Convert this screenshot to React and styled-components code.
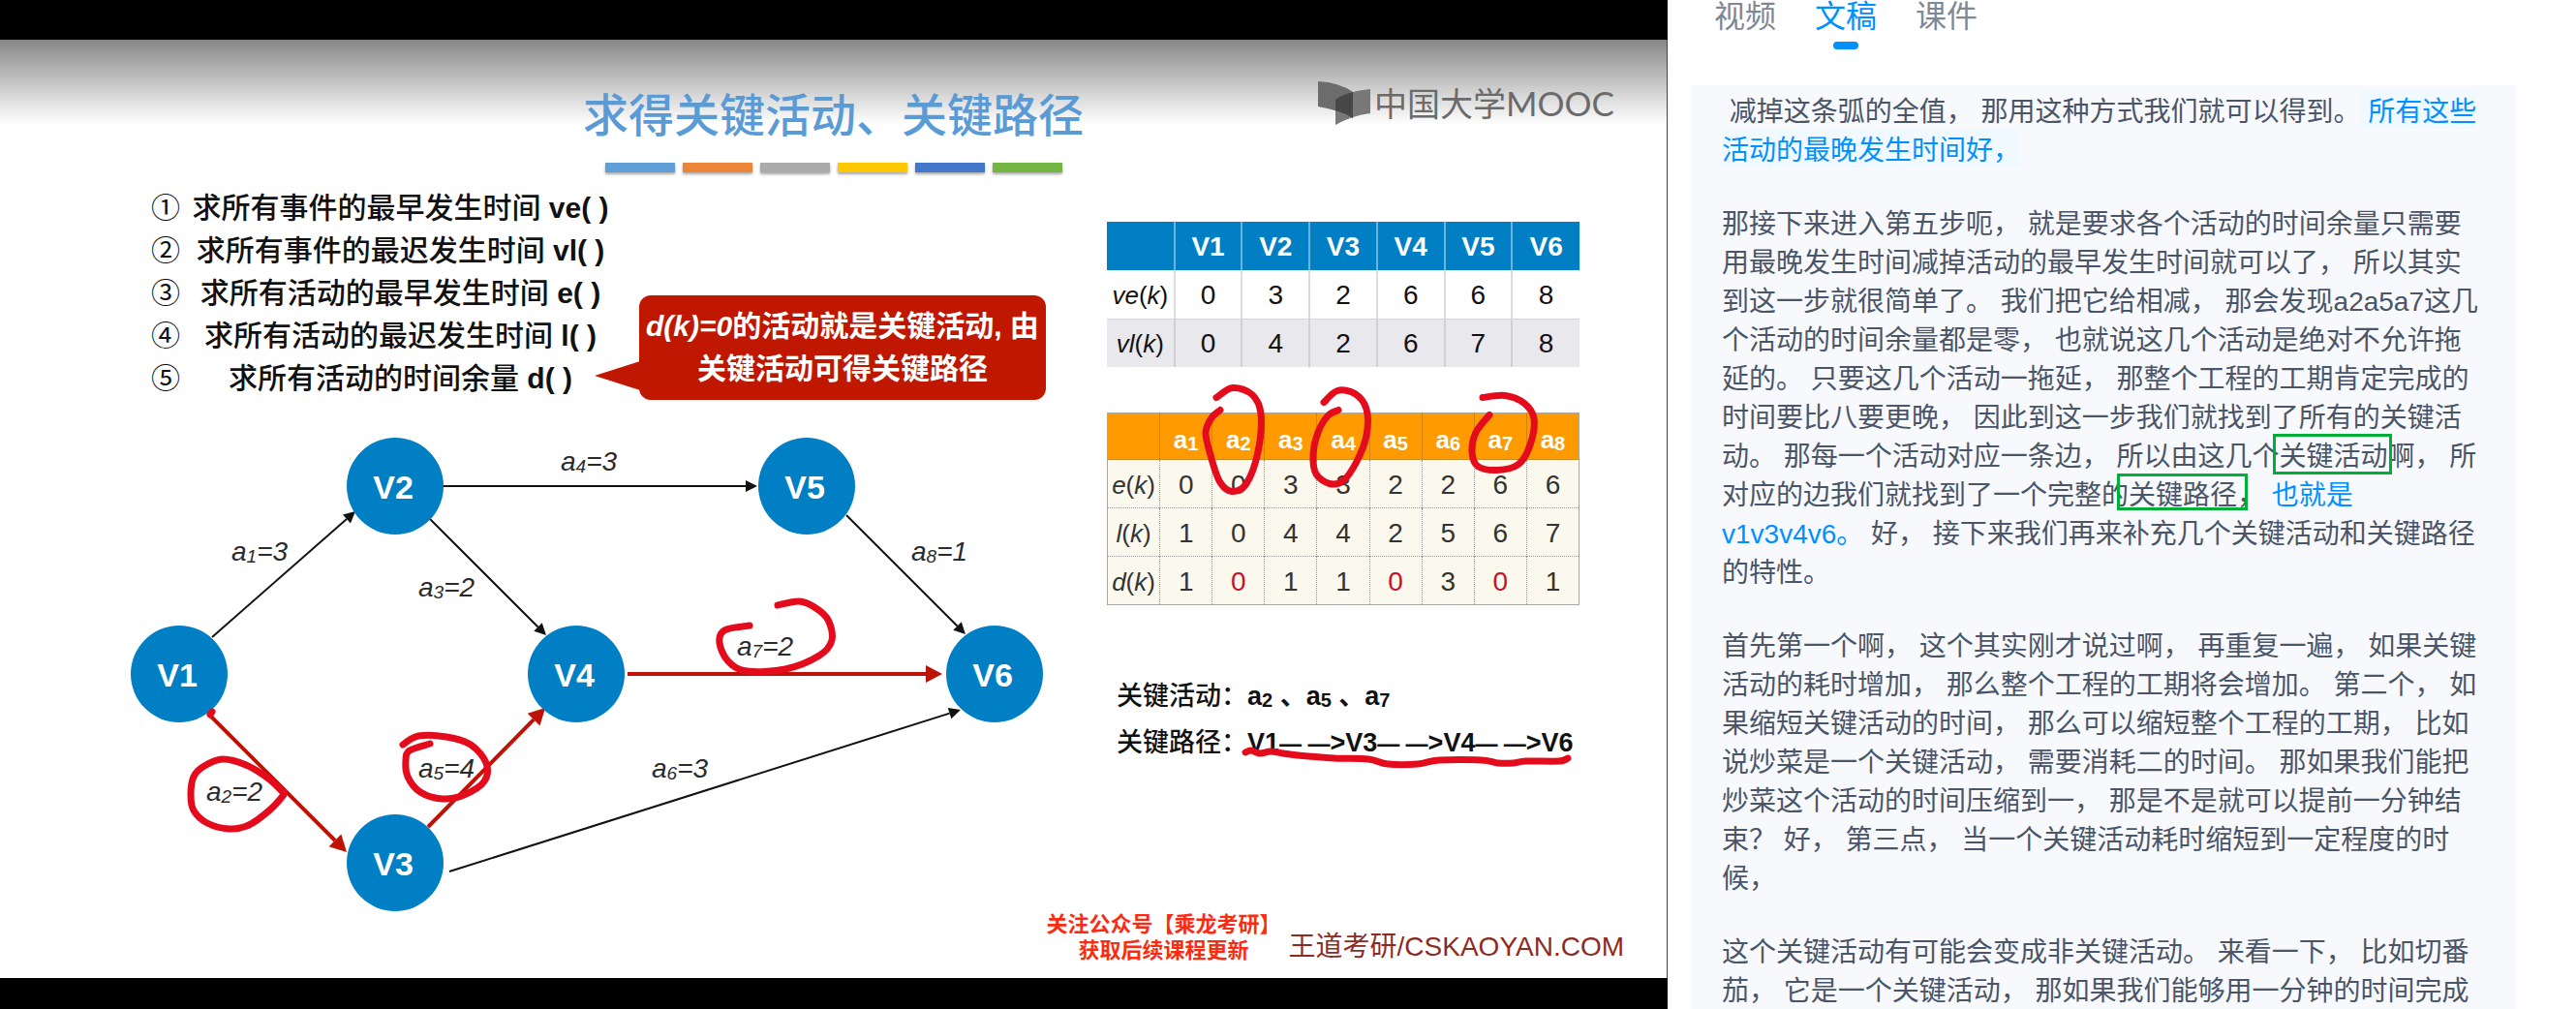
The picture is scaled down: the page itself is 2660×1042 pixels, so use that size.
import React from "react";
import styled, { createGlobalStyle, css } from "styled-components";

const SANS = '"Liberation Sans", "Noto Sans CJK SC", sans-serif';

const GlobalStyle = createGlobalStyle`
  *, *::before, *::after { box-sizing: border-box; }
  html, body { margin: 0; height: 100%; }
  body { background: #fff; font-family: ${SANS}; overflow: hidden; }
  #root { height: 100%; }
  h1, p, ol, ul { margin: 0; padding: 0; }
`;

const Page = styled.div`
  display: grid;
  grid-template-columns: 1722fr 938fr;
  min-height: 100%;
`;

/* ---------- video side ---------- */

const Player = styled.main`
  display: flex;
  flex-direction: column;
  padding: 41px 0 32px;
  background: #000;
`;

const Slide = styled.section`
  flex: 1;
  display: flex;
  flex-direction: column;
  border-right: 1px solid #444;
  background: linear-gradient(#868686 0, #b4b4b4 32px, #e0e0e0 64px, #fff 88px);
`;

const SlideHeader = styled.header`
  display: grid;
  grid-template-columns: 1fr auto 1fr;
  align-items: start;
  padding: 40px 54px 0;
`;

const Heading = styled.div`
  grid-column: 2;
  display: flex;
  flex-direction: column;
  align-items: center;
  gap: 15px;
  padding-top: 5px;
`;

const Title = styled.h1`
  color: #5b9bd5;
  font-size: 47px;
  font-weight: 500;
  line-height: 67px;
`;

const Bars = styled.div`
  display: flex;
  gap: 8px;
`;

const Bar = styled.span`
  width: 72px;
  height: 10px;
  background: ${(p) => p.$color};
  box-shadow: 0 2px 3px rgba(0, 0, 0, 0.35);
`;

const Brand = styled.div`
  justify-self: end;
  display: flex;
  align-items: center;
  gap: 4px;
  color: #6b6b6b;
  font-size: 34px;
  font-weight: 400;
  line-height: 50px;
`;

const BrandLatin = styled.span`
  font-family: Lato, ${SANS};
  font-size: 35px;
`;

const SlideBody = styled.div`
  display: grid;
  grid-template-columns: minmax(0, 1fr) 488px;
  padding: 15px 90px 0 100px;
`;

const StepsRow = styled.div`
  display: flex;
  align-items: flex-end;
  padding-left: 56px;
`;

const Steps = styled.ol`
  list-style: none;
  width: 475px;
`;

const Step = styled.li`
  display: grid;
  grid-template-columns: 30px 1fr;
  column-gap: 10px;
  color: #111;
  font-size: 30px;
  font-weight: 500;
  line-height: 44px;
  text-align: center;
`;

const StepMark = styled.span`
  font-weight: 400;
`;

const Code = styled.b`
  font-weight: 700;
`;

const Callout = styled.div`
  position: relative;
  margin-left: 29px;
  padding: 10px 7px;
  border-radius: 12px;
  background: #c01700;
  color: #fff;
  font-size: 30px;
  font-weight: 700;
  line-height: 44px;
  text-align: center;
  white-space: nowrap;

  &::before {
    content: "";
    position: absolute;
    left: -46px;
    top: 68px;
    border: solid transparent;
    border-width: 15px 47px 15px 0;
    border-right-color: #c01700;
  }
`;

const Diagram = styled.svg`
  display: block;
  width: 100%;
  margin-top: 19px;
  overflow: visible;
`;

const NodeText = styled.text`
  fill: #fff;
  font: 700 34px ${SANS};
  text-anchor: middle;
`;

const EdgeText = styled.text`
  fill: #2b2b2b;
  font: italic 28px ${SANS};
`;

const Results = styled.div`
  display: flex;
  flex-direction: column;
  padding-top: 36px;
`;

const TableWrap = styled.div`
  position: relative;
  margin-top: ${(p) => p.$gap || 0}px;
`;

const InkOverlay = styled.svg`
  position: absolute;
  inset: 0;
  width: 100%;
  height: 100%;
  overflow: visible;
  pointer-events: none;
`;

const Grid = styled.table`
  width: 100%;
  table-layout: fixed;
  border-collapse: collapse;
  text-align: center;
  font-size: 28px;
  line-height: 32px;

  th, td { padding: 2px 0 0; }
  tbody th {
    font-size: 26px;
    font-weight: 400;
    white-space: nowrap;
  }
`;

const EventTable = styled(Grid)`
  color: #111;
  th, td { height: 50px; }
  thead th {
    background: #007fc4;
    color: #fff;
    font-weight: 700;
  }
  th + th { border-left: 2px solid #6db4dd; }
  td { border-left: 2px solid #dcdce0; }
  tbody tr + tr {
    background: #e8e8ed;
    border-top: 1px solid #d4d4d8;
    td { border-left-color: #cfcfd4; }
  }
`;

const ActivityTable = styled(Grid)`
  border: 1px solid #a8a8a0;
  color: #333;
  th, td { height: 50px; }
  thead th {
    height: 48px;
    padding-top: 6px;
    background: #ff9b00;
    color: #fff;
    font-size: 26px;
    font-weight: 700;
    border-bottom: 1px solid #c98a2a;
  }
  thead th + th { border-left: 1px solid #cf8210; }
  tbody { background: #fbf9ee; }
  td { border-left: 1px dotted #999; }
  tbody tr + tr { border-top: 1px dotted #999; }
`;

const Cell = styled.td`
  ${(p) => p.$zero && css`color: #c4122c;`}
`;

const Sub = styled.span`
  font-size: 20px;
  line-height: 0;
  vertical-align: -2px;
`;

const Summary = styled.div`
  position: relative;
  margin: 70px 0 0 10px;
  color: #111;
  font-size: 27px;
  font-weight: 500;
  line-height: 48px;
  white-space: nowrap;
`;

const SummaryBold = styled.b`
  font-weight: 700;
`;

const Dashes = styled.span`
  font-size: 23px;
  line-height: 0;
`;

const SlideFooter = styled.footer`
  display: flex;
  justify-content: flex-end;
  align-items: flex-end;
  gap: 8px;
  margin-top: auto;
  padding: 0 44px 13px;
`;

const Promo = styled.p`
  padding-bottom: 2px;
  color: #fb2b12;
  font-size: 22px;
  font-weight: 700;
  line-height: 27px;
  text-align: center;
`;

const Credit = styled.p`
  color: #8e2a22;
  font-size: 28px;
  line-height: 38px;
`;

/* ---------- transcript side ---------- */

const Side = styled.aside`
  height: 100vh;
  overflow: hidden;
  padding: 0 62px 0 24px;
  background: #fff;
`;

const Tabs = styled.nav`
  display: flex;
  gap: 40px;
  height: 88px;
  padding: 1px 0 0 24px;
`;

const Tab = styled.button`
  display: flex;
  flex-direction: column;
  align-items: center;
  gap: 10px;
  height: 50px;
  padding: 0;
  border: 0;
  background: none;
  color: ${(p) => (p.$active ? "#0091ff" : "#7f8896")};
  font: 400 32px/32px ${SANS};

  &::after {
    content: "";
    width: 26px;
    height: 8px;
    border-radius: 4px;
    background: ${(p) => (p.$active ? "#0091ff" : "transparent")};
  }
`;

const Transcript = styled.article`
  display: flex;
  flex-direction: column;
  gap: 36px;
  padding: 8px 32px 36px;
  background: #f8f9fd;
  color: #4a5568;
  font-size: 28px;
  line-height: 40px;
`;

const Blue = styled.span`
  color: #0091ff;
  ${(p) => p.$lit && css`
    padding: 6px 0 2px;
    background: #f0f9ff;
  `}
`;

const Boxed = styled.mark`
  position: relative;
  background: none;
  color: inherit;

  &::after {
    content: "";
    position: absolute;
    inset: ${(p) => (p.$wide ? "-7px -11px 0 -12px" : "-8px -4px -3px -7px")};
    border: 3px solid #00b036;
  }
`;

/* ---------- data ---------- */

const BAR_COLORS = ["#5f9ed6", "#ed8538", "#ababab", "#fec700", "#4478cb", "#75b544"];

const STEPS = [
  ["①", "求所有事件的最早发生时间", "ve( )"],
  ["②", "求所有事件的最迟发生时间", "vl( )"],
  ["③", "求所有活动的最早发生时间", "e( )"],
  ["④", "求所有活动的最迟发生时间", "l( )"],
  ["⑤", "求所有活动的时间余量", "d( )"],
];

const NODES = [
  ["V1", 185, 696], ["V2", 408, 502], ["V3", 408, 891],
  ["V4", 595, 696], ["V5", 833, 502], ["V6", 1027, 696],
];

const EDGES = [
  [219, 658, 367, 528], [444, 536, 564, 656], [458, 502, 782, 502],
  [874, 532, 997, 655], [464, 900, 992, 733],
];

const CRITICAL_EDGES = [
  [648, 696, 973, 696], [216, 738, 358, 880], [442, 854, 563, 731],
];

const EDGE_LABELS = [
  [1, 3, 239, 579], [2, 2, 213, 827], [3, 2, 432, 616], [4, 3, 579, 486],
  [5, 4, 432, 803], [6, 3, 673, 803], [7, 2, 761, 677], [8, 1, 941, 579],
];

const GRAPH_INK = [
  [[293, 819], [277, 804], [254, 790], [230, 784], [211, 791], [200, 802], [197, 821], [200, 837], [214, 850], [237, 856], [257, 852], [278, 837], [292, 822], [293, 818]],
  [[416, 769], [432, 760], [461, 761], [486, 769], [502, 788], [500, 807], [479, 821], [457, 825], [434, 818], [421, 802], [419, 785], [423, 775], [444, 768]],
  [[774, 646], [748, 651], [743, 664], [752, 683], [771, 693], [811, 691], [846, 677], [859, 661], [855, 640], [841, 627], [825, 621], [803, 625]],
  [[219, 735], [217, 738]],
];

const TABLE_INK = [
  [[1256, 411], [1273, 401], [1293, 408], [1302, 428], [1299, 467], [1287, 500], [1272, 508], [1259, 497], [1249, 467], [1245, 447], [1251, 432], [1260, 424]],
  [[1367, 416], [1381, 404], [1399, 407], [1411, 423], [1411, 450], [1401, 477], [1387, 497], [1373, 500], [1359, 490], [1356, 470], [1361, 447], [1371, 430], [1382, 424]],
  [[1531, 411], [1554, 409], [1574, 417], [1584, 433], [1580, 460], [1568, 480], [1546, 486], [1526, 482], [1520, 467], [1524, 447], [1538, 429]],
];

const UNDERLINE_INK = [
  [1286, 778], [1292, 776], [1301, 779], [1312, 777], [1325, 779], [1340, 781], [1378, 784],
  [1413, 785], [1433, 790], [1464, 790], [1486, 786], [1530, 786], [1547, 789], [1563, 789],
  [1576, 787], [1610, 787], [1619, 784],
];

const EVENTS = [["ve", [0, 3, 2, 6, 6, 8]], ["vl", [0, 4, 2, 6, 7, 8]]];

const ACTIVITIES = [
  ["e", [0, 0, 3, 3, 2, 2, 6, 6]],
  ["l", [1, 0, 4, 4, 2, 5, 6, 7]],
  ["d", [1, 0, 1, 1, 0, 3, 0, 1]],
];

/* Smooth curve through hand-drawn points. */
function strokePath(points) {
  let d = `M${points[0]}`;
  for (let i = 0; i < points.length - 1; i++) {
    const a = points[i - 1] || points[i];
    const b = points[i];
    const c = points[i + 1];
    const e = points[i + 2] || c;
    d += ` C${b[0] + (c[0] - a[0]) / 6},${b[1] + (c[1] - a[1]) / 6} ${c[0] - (e[0] - b[0]) / 6},${c[1] - (e[1] - b[1]) / 6} ${c}`;
  }
  return d;
}

function Ink({ points }) {
  return <path d={strokePath(points)} fill="none" stroke="#e30b1c" strokeWidth="7" strokeLinecap="round" strokeLinejoin="round" />;
}

function Arrow({ ends, critical }) {
  const [x1, y1, x2, y2] = ends;
  const len = Math.hypot(x2 - x1, y2 - y1);
  const ux = (x2 - x1) / len;
  const uy = (y2 - y1) / len;
  const head = critical ? 17 : 12;
  const half = critical ? 9 : 6;
  const bx = x2 - ux * head;
  const by = y2 - uy * head;
  const color = critical ? "#bd1206" : "#111";
  return (
    <g fill={color} stroke={color}>
      <line x1={x1} y1={y1} x2={bx} y2={by} strokeWidth={critical ? 4 : 2} />
      <polygon stroke="none" points={`${x2},${y2} ${bx - uy * half},${by + ux * half} ${bx + uy * half},${by - ux * half}`} />
    </g>
  );
}

function Graph() {
  return (
    <Diagram viewBox="100 432 1043 506" role="img" aria-label="AOE">
      {EDGES.map((e) => <Arrow key={e.join()} ends={e} />)}
      {CRITICAL_EDGES.map((e) => <Arrow key={e.join()} ends={e} critical />)}
      {NODES.map(([name, x, y]) => (
        <g key={name}>
          <circle cx={x} cy={y} r="50" fill="#007fc4" />
          <NodeText x={x - 2} y={y + 13}>{name}</NodeText>
        </g>
      ))}
      {EDGE_LABELS.map(([n, value, x, y]) => (
        <EdgeText key={n} x={x} y={y}>
          a<tspan fontSize="19" dy="2">{n}</tspan><tspan dy="-2">={value}</tspan>
        </EdgeText>
      ))}
      {GRAPH_INK.map((points, i) => <Ink key={i} points={points} />)}
    </Diagram>
  );
}

function MoocMark() {
  return (
    <svg width="54" height="46" viewBox="0 0 54 46" aria-hidden="true">
      <path d="M0 0 Q22 1 36 11 V38 Q20 29 0 26Z" fill="#6c6c6c" />
      <path d="M18 19 Q30 10 54 8 V33 Q36 35 18 45Z" fill="#787878" />
      <path d="M18 19 Q24 14 36 11 V38 Q28 33 18 30Z" fill="#474747" />
    </svg>
  );
}

function RowHead({ name }) {
  return <th scope="row"><i>{name}</i>(<i>k</i>)</th>;
}

export default function App() {
  return (
    <>
      <GlobalStyle />
      <Page>
        <Player>
          <Slide>
            <SlideHeader>
              <Heading>
                <Title>求得关键活动、关键路径</Title>
                <Bars>{BAR_COLORS.map((c) => <Bar key={c} $color={c} />)}</Bars>
              </Heading>
              <Brand><MoocMark /><span>中国大学<BrandLatin>MOOC</BrandLatin></span></Brand>
            </SlideHeader>

            <SlideBody>
              <div>
                <StepsRow>
                  <Steps>
                    {STEPS.map(([mark, text, fn]) => (
                      <Step key={mark}><StepMark>{mark}</StepMark><span>{text} <Code>{fn}</Code></span></Step>
                    ))}
                  </Steps>
                  <Callout>
                    <i>d(k)=0</i>的活动就是关键活动, 由<br />关键活动可得关键路径
                  </Callout>
                </StepsRow>
                <Graph />
              </div>

              <Results>
                <TableWrap>
                  <EventTable>
                    <thead>
                      <tr><th />{[1, 2, 3, 4, 5, 6].map((n) => <th key={n} scope="col">V{n}</th>)}</tr>
                    </thead>
                    <tbody>
                      {EVENTS.map(([name, values]) => (
                        <tr key={name}><RowHead name={name} />{values.map((v, i) => <td key={i}>{v}</td>)}</tr>
                      ))}
                    </tbody>
                  </EventTable>
                </TableWrap>
                <TableWrap $gap={47}>
                  <ActivityTable>
                    <thead>
                      <tr><th />{[1, 2, 3, 4, 5, 6, 7, 8].map((n) => <th key={n} scope="col">a<Sub>{n}</Sub></th>)}</tr>
                    </thead>
                    <tbody>
                      {ACTIVITIES.map(([name, values]) => (
                        <tr key={name}>
                          <RowHead name={name} />
                          {values.map((v, i) => <Cell key={i} $zero={name === "d" && v === 0}>{v}</Cell>)}
                        </tr>
                      ))}
                    </tbody>
                  </ActivityTable>
                  <InkOverlay viewBox="1143 427 488 198" aria-hidden="true">
                    {TABLE_INK.map((points, i) => <Ink key={i} points={points} />)}
                  </InkOverlay>
                </TableWrap>
                <Summary>
                  <div>关键活动：<SummaryBold>a<Sub>2</Sub> 、a<Sub>5</Sub> 、a<Sub>7</Sub></SummaryBold></div>
                  <div>
                    关键路径：
                    <SummaryBold>
                      V1<Dashes>— —</Dashes>&gt;V3<Dashes>— —</Dashes>&gt;V4<Dashes>— —</Dashes>&gt;V6
                    </SummaryBold>
                  </div>
                  <InkOverlay viewBox="1153 696 478 96" aria-hidden="true">
                    <Ink points={UNDERLINE_INK} />
                  </InkOverlay>
                </Summary>
              </Results>
            </SlideBody>

            <SlideFooter>
              <Promo>关注公众号【乘龙考研】<br />获取后续课程更新</Promo>
              <Credit>王道考研/CSKAOYAN.COM</Credit>
            </SlideFooter>
          </Slide>
        </Player>

        <Side>
          <Tabs>
            <Tab type="button">视频</Tab>
            <Tab type="button" $active>文稿</Tab>
            <Tab type="button">课件</Tab>
          </Tabs>
          <Transcript>
            <p>
              &nbsp;减掉这条弧的全值， 那用这种方式我们就可以得到。<Blue $lit> 所有这些活动的最晚发生时间好，</Blue>
            </p>
            <p>
              那接下来进入第五步呃， 就是要求各个活动的时间余量只需要用最晚发生时间减掉活动的最早发生时间就可以了， 所以其实到这一步就很简单了。 我们把它给相减， 那会发现a2a5a7这几个活动的时间余量都是零， 也就说这几个活动是绝对不允许拖延的。 只要这几个活动一拖延， 那整个工程的工期肯定完成的时间要比八要更晚， 因此到这一步我们就找到了所有的关键活动。 那每一个活动对应一条边， 所以由这几个<Boxed>关键活动</Boxed>啊， 所对应的边我们就找到了一个完整的<Boxed $wide>关键路径</Boxed>， <Blue>也就是v1v3v4v6。</Blue> 好， 接下来我们再来补充几个关键活动和关键路径的特性。
            </p>
            <p>
              首先第一个啊， 这个其实刚才说过啊， 再重复一遍， 如果关键活动的耗时增加， 那么整个工程的工期将会增加。 第二个， 如果缩短关键活动的时间， 那么可以缩短整个工程的工期， 比如说炒菜是一个关键活动， 需要消耗二的时间。 那如果我们能把炒菜这个活动的时间压缩到一， 那是不是就可以提前一分钟结束？ 好， 第三点， 当一个关键活动耗时缩短到一定程度的时候，
            </p>
            <p>
              这个关键活动有可能会变成非关键活动。 来看一下， 比如切番茄， 它是一个关键活动， 那如果我们能够用一分钟的时间完成
            </p>
          </Transcript>
        </Side>
      </Page>
    </>
  );
}
